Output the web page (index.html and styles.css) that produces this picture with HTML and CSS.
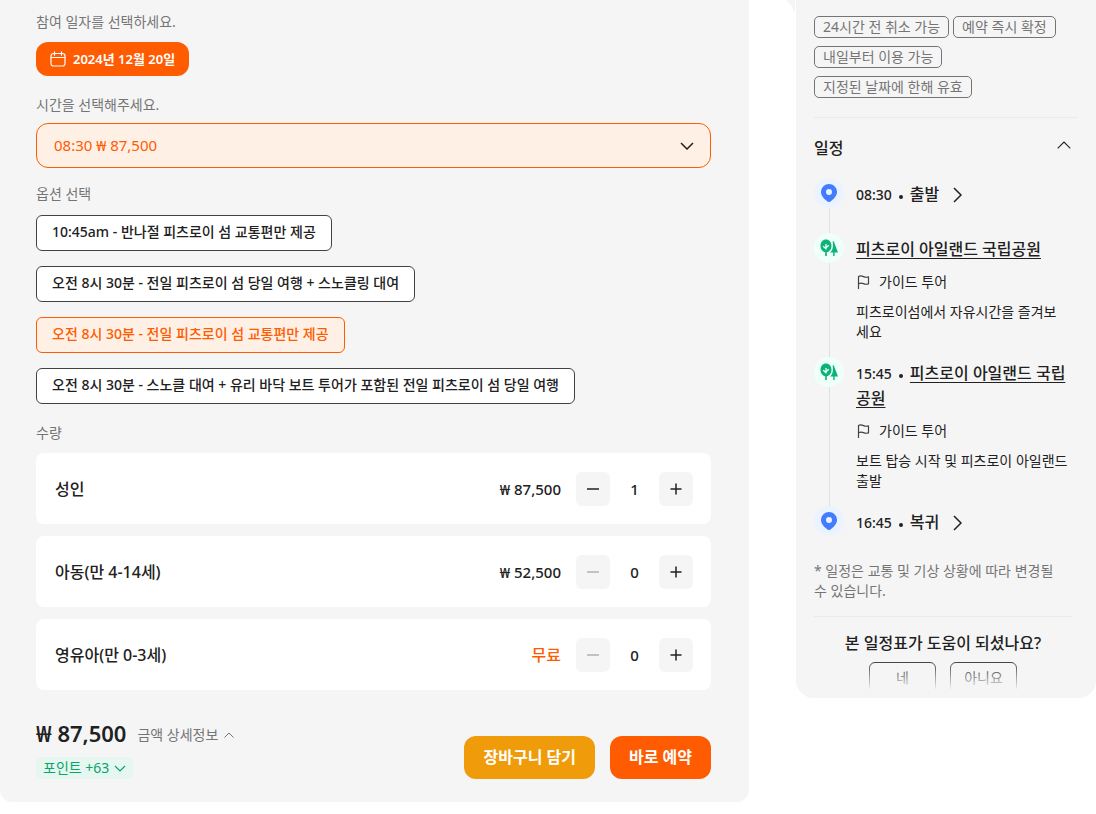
FILE: index.html
```html
<!DOCTYPE html>
<html lang="ko">
<head>
    <meta charset="UTF-8">
    <meta name="viewport" content="width=device-width, initial-scale=1.0">
    <title>피츠로이 섬 투어 예약</title>
    <link rel="stylesheet" href="styles.css">
</head>
<body>
    <div class="page">
        <!-- 예약 옵션 -->
        <main class="booking">
            <p class="label">참여 일자를 선택하세요.</p>
            <button class="date-btn" type="button">
                <svg width="16" height="16" viewBox="0 0 16 16" fill="none" stroke="currentColor" stroke-width="1.2" stroke-linecap="round">
                    <rect x="1" y="2.5" width="14" height="12.5" rx="2.5"/>
                    <path d="M1 6.5h14M4.5 .8v3.4M11.5 .8v3.4"/>
                </svg>
                2024년 12월 20일
            </button>

            <label class="label" for="time">시간을 선택해주세요.</label>
            <div class="time-box">
                <select id="time" class="time-select">
                    <option>08:30 ₩ 87,500</option>
                </select>
                <svg class="time-arrow" width="14" height="8" viewBox="0 0 14 8" fill="none" stroke="#212121" stroke-width="1.5">
                    <path d="M1 1l6 6 6-6"/>
                </svg>
            </div>

            <p class="label">옵션 선택</p>
            <div class="options">
                <button class="option" type="button">10:45am - 반나절 피츠로이 섬 교통편만 제공</button>
                <button class="option" type="button">오전 8시 30분 - 전일 피츠로이 섬 당일 여행 + 스노클링 대여</button>
                <button class="option selected" type="button">오전 8시 30분 - 전일 피츠로이 섬 교통편만 제공</button>
                <button class="option" type="button">오전 8시 30분 - 스노클 대여 + 유리 바닥 보트 투어가 포함된 전일 피츠로이 섬 당일 여행</button>
            </div>

            <p class="label">수량</p>
            <div class="quantities">
                <div class="qty-row">
                    <span class="qty-name">성인</span>
                    <span class="qty-price">₩ 87,500</span>
                    <button class="step" type="button" aria-label="성인 빼기">
                        <svg width="14" height="14" viewBox="0 0 14 14" stroke="currentColor" stroke-width="1.5"><path d="M1 7h12"/></svg>
                    </button>
                    <span class="qty-value">1</span>
                    <button class="step" type="button" aria-label="성인 더하기">
                        <svg width="14" height="14" viewBox="0 0 14 14" stroke="currentColor" stroke-width="1.5"><path d="M1.5 7h11M7 1.5v11"/></svg>
                    </button>
                </div>
                <div class="qty-row">
                    <span class="qty-name">아동(만 4-14세)</span>
                    <span class="qty-price">₩ 52,500</span>
                    <button class="step" type="button" aria-label="아동 빼기" disabled>
                        <svg width="14" height="14" viewBox="0 0 14 14" stroke="currentColor" stroke-width="1.5"><path d="M1 7h12"/></svg>
                    </button>
                    <span class="qty-value">0</span>
                    <button class="step" type="button" aria-label="아동 더하기">
                        <svg width="14" height="14" viewBox="0 0 14 14" stroke="currentColor" stroke-width="1.5"><path d="M1.5 7h11M7 1.5v11"/></svg>
                    </button>
                </div>
                <div class="qty-row">
                    <span class="qty-name">영유아(만 0-3세)</span>
                    <span class="qty-price free">무료</span>
                    <button class="step" type="button" aria-label="영유아 빼기" disabled>
                        <svg width="14" height="14" viewBox="0 0 14 14" stroke="currentColor" stroke-width="1.5"><path d="M1 7h12"/></svg>
                    </button>
                    <span class="qty-value">0</span>
                    <button class="step" type="button" aria-label="영유아 더하기">
                        <svg width="14" height="14" viewBox="0 0 14 14" stroke="currentColor" stroke-width="1.5"><path d="M1.5 7h11M7 1.5v11"/></svg>
                    </button>
                </div>
            </div>

            <div class="summary">
                <div class="totals">
                    <div class="total-line">
                        <strong class="total">₩ 87,500</strong>
                        <button class="detail-btn" type="button">
                            금액 상세정보
                            <svg width="10" height="6" viewBox="0 0 10 6" fill="none" stroke="currentColor"><path d="M.5 5.5L5 1l4.5 4.5"/></svg>
                        </button>
                    </div>
                    <button class="points" type="button">
                        포인트 +63
                        <svg width="12" height="7" viewBox="0 0 12 7" fill="none" stroke="currentColor" stroke-width="1.2"><path d="M1 1l5 5 5-5"/></svg>
                    </button>
                </div>
                <div class="actions">
                    <button class="action cart" type="button">장바구니 담기</button>
                    <button class="action book" type="button">바로 예약</button>
                </div>
            </div>
        </main>

        <!-- 상품 요약 -->
        <aside class="side">
            <div class="tags">
                <span class="tag">24시간 전 취소 가능</span>
                <span class="tag">예약 즉시 확정</span>
                <span class="tag">내일부터 이용 가능</span>
                <span class="tag">지정된 날짜에 한해 유효</span>
            </div>

            <div class="side-head">
                <h2 class="side-title">일정</h2>
                <button class="fold" type="button" aria-label="접기">
                    <svg width="14" height="8" viewBox="0 0 14 8" fill="none" stroke="#212121" stroke-width="1.1"><path d="M.7 7.3L7 1l6.3 6.3"/></svg>
                </button>
            </div>

            <ol class="timeline">
                <li class="stop">
                    <span class="dot pin">
                        <svg width="16" height="18" viewBox="0 0 16 18"><path fill="#437dff" fill-rule="evenodd" d="M8 0a8 8 0 0 1 8 8c0 4-3.2 7-6.5 9.5a2.5 2.5 0 0 1-3 0C3.2 15 0 12 0 8a8 8 0 0 1 8-8zm0 5a3 3 0 1 0 0 6 3 3 0 0 0 0-6z"/></svg>
                    </span>
                    <div class="stop-body">
                        <h3 class="stop-title"><time>08:30</time><i class="bullet"></i>출발
                            <svg class="go" width="9" height="16" viewBox="0 0 9 16" fill="none" stroke="currentColor" stroke-width="1.5"><path d="M1 1l7 7-7 7"/></svg>
                        </h3>
                    </div>
                </li>
                <li class="stop">
                    <span class="dot park">
                        <svg width="18" height="18" viewBox="0 0 18 18">
                            <path fill="#0cb377" d="M6 .5c3.200 0 5.500 2.700 5.500 6.300 0 3.400-1.900 6-4.700 6.500V17H5.200v-3.700C2.400 12.800.5 10.200.5 6.800.5 3.200 2.800.5 6 .5z"/>
                            <path fill="#0cb377" d="M12.700 2.500c.4-.4.900-.4 1.200.2L18 13.500h-3.400V17h-1.400v-3.500h-3c1.900-1.600 2.700-4 2.700-6.700 0-1.600-.1-3-.2-4.300z"/>
                            <path fill="none" stroke="#effff9" stroke-width="1.300" d="M6 10.500V5M6 9.800L3.200 7.200M6 8.800l2.800-2.600"/>
                        </svg>
                    </span>
                    <div class="stop-body">
                        <h3 class="stop-title"><a class="place" href="#">피츠로이 아일랜드 국립공원</a></h3>
                        <p class="kind">
                            <svg width="14" height="14" viewBox="0 0 14 14" fill="none" stroke="#424242" stroke-width="1.2" stroke-linejoin="round"><path d="M2.5 14V1.500C4.500.300 6 .900 7.500 1.600s3 .900 5 .3v7c-2 .6-3.500.4-5-.3s-3-1-5 .2"/></svg>
                            가이드 투어
                        </p>
                        <p class="desc">피츠로이섬에서 자유시간을 즐겨보세요</p>
                    </div>
                </li>
                <li class="stop">
                    <span class="dot park">
                        <svg width="18" height="18" viewBox="0 0 18 18">
                            <path fill="#0cb377" d="M6 .5c3.200 0 5.500 2.700 5.500 6.300 0 3.400-1.900 6-4.700 6.500V17H5.200v-3.700C2.400 12.800.5 10.200.5 6.800.5 3.200 2.800.5 6 .5z"/>
                            <path fill="#0cb377" d="M12.700 2.500c.4-.4.900-.4 1.200.2L18 13.500h-3.400V17h-1.400v-3.500h-3c1.900-1.600 2.700-4 2.700-6.700 0-1.600-.1-3-.2-4.300z"/>
                            <path fill="none" stroke="#effff9" stroke-width="1.300" d="M6 10.500V5M6 9.800L3.200 7.200M6 8.800l2.800-2.600"/>
                        </svg>
                    </span>
                    <div class="stop-body">
                        <h3 class="stop-title"><time>15:45</time><i class="bullet"></i><a class="place" href="#">피츠로이 아일랜드 국립공원</a></h3>
                        <p class="kind">
                            <svg width="14" height="14" viewBox="0 0 14 14" fill="none" stroke="#424242" stroke-width="1.2" stroke-linejoin="round"><path d="M2.5 14V1.500C4.500.300 6 .900 7.500 1.600s3 .900 5 .3v7c-2 .6-3.500.4-5-.3s-3-1-5 .2"/></svg>
                            가이드 투어
                        </p>
                        <p class="desc">보트 탑승 시작 및 피츠로이 아일랜드 출발</p>
                    </div>
                </li>
                <li class="stop">
                    <span class="dot pin">
                        <svg width="16" height="18" viewBox="0 0 16 18"><path fill="#437dff" fill-rule="evenodd" d="M8 0a8 8 0 0 1 8 8c0 4-3.2 7-6.5 9.5a2.5 2.5 0 0 1-3 0C3.2 15 0 12 0 8a8 8 0 0 1 8-8zm0 5a3 3 0 1 0 0 6 3 3 0 0 0 0-6z"/></svg>
                    </span>
                    <div class="stop-body">
                        <h3 class="stop-title"><time>16:45</time><i class="bullet"></i>복귀
                            <svg class="go" width="9" height="16" viewBox="0 0 9 16" fill="none" stroke="currentColor" stroke-width="1.5"><path d="M1 1l7 7-7 7"/></svg>
                        </h3>
                    </div>
                </li>
            </ol>

            <p class="note">* 일정은 교통 및 기상 상황에 따라 변경될 수 있습니다.</p>

            <div class="feedback">
                <p class="question">본 일정표가 도움이 되셨나요?</p>
                <div class="answers">
                    <button class="answer" type="button">네</button>
                    <button class="answer" type="button">아니요</button>
                </div>
            </div>
        </aside>
    </div>
</body>
</html>
```
FILE: styles.css
```css
* {
    box-sizing: border-box;
}

body {
    margin: 0;
    background: #fff;
    color: #212121;
    font-family: "Noto Sans", "Noto Sans CJK KR", sans-serif;
    font-size: 14px;
    line-height: 20px;
}

p, h2, h3, ol {
    margin: 0;
    padding: 0;
}

button, select {
    font: inherit;
    color: inherit;
    cursor: pointer;
}

svg {
    flex: none;
}

.page {
    display: flex;
    align-items: flex-start;
    gap: 47px;
}

/* 예약 옵션 */
.booking {
    flex: 1;
    min-width: 0;
    padding: 12px 38px 23px 36px;
    background: #f5f5f5;
    border-radius: 0 0 12px 12px;
}

.label {
    display: block;
    color: #757575;
}

.date-btn {
    display: flex;
    align-items: center;
    gap: 7px;
    height: 34px;
    margin: 10px 0 19px;
    padding: 0 14px;
    border: 0;
    border-radius: 12px;
    background: #ff5b00;
    color: #fff;
    font-size: 13px;
    font-weight: 600;
}

.time-box {
    display: grid;
    align-items: center;
    margin: 8px 0 16px;
}

.time-select {
    grid-area: 1 / 1;
    appearance: none;
    width: 100%;
    height: 45px;
    padding: 0 17px 2px;
    border: 1px solid #ff5b00;
    border-radius: 12px;
    background: #fff0e5;
    color: #ff5b00;
    font-size: 15px;
}

.time-arrow {
    grid-area: 1 / 1;
    justify-self: end;
    margin-right: 17px;
    pointer-events: none;
}

.options {
    display: flex;
    flex-direction: column;
    align-items: flex-start;
    gap: 15px;
    margin: 11px 0 19px;
}

.option {
    min-height: 36px;
    padding: 0 15px 2px;
    border: 1px solid #424242;
    border-radius: 6px;
    background: #fff;
    font-weight: 500;
    text-align: left;
}

.option.selected {
    border-color: #ff5b00;
    background: #fff0e5;
    color: #ff5b00;
}

.quantities {
    display: flex;
    flex-direction: column;
    gap: 12px;
    margin-top: 10px;
}

.qty-row {
    display: flex;
    align-items: center;
    height: 71px;
    padding: 0 18px 0 19px;
    border-radius: 8px;
    background: #fff;
    font-size: 15px;
    font-weight: 500;
}

.qty-name {
    flex: 1;
    font-size: 16px;
}

.qty-price {
    margin-right: 15px;
}

.qty-price.free {
    color: #ff5b00;
    font-size: 16px;
}

.qty-value {
    width: 49px;
    text-align: center;
}

.step {
    display: flex;
    align-items: center;
    justify-content: center;
    width: 34px;
    height: 34px;
    padding: 0;
    border: 0;
    border-radius: 6px;
    background: #f5f5f5;
}

.step:disabled {
    color: #b0b0b0;
    cursor: default;
}

.summary {
    display: flex;
    align-items: flex-end;
    justify-content: space-between;
    margin-top: 28px;
}

.total-line {
    display: flex;
    align-items: center;
    gap: 11px;
    height: 30px;
}

.total {
    font-size: 22px;
    font-weight: 600;
}

.detail-btn {
    display: flex;
    align-items: center;
    gap: 6px;
    padding: 4px 0 0;
    border: 0;
    background: none;
    color: #757575;
}

.points {
    display: flex;
    align-items: center;
    gap: 5px;
    height: 22px;
    margin-top: 9px;
    padding: 0 7px;
    border: 0;
    border-radius: 5px;
    background: #e6f6f0;
    color: #08a668;
}

.actions {
    display: flex;
    gap: 15px;
}

.action {
    height: 43px;
    padding: 0 19px 2px;
    border: 0;
    border-radius: 12px;
    color: #fff;
    font-size: 16px;
    font-weight: 600;
}

.cart {
    background: #f09b0a;
}

.book {
    background: #ff5b00;
}

/* 상품 요약 */
.side {
    position: relative;
    width: 300px;
    padding: 16px 18px 4px;
    background: #f5f5f5;
    border-radius: 0 0 18px 18px;
}

.side::before {
    content: "";
    position: absolute;
    top: 0;
    left: -10px;
    width: 9px;
    height: 13px;
    background: #f5f5f5;
    clip-path: polygon(0 0, 100% 0, 100% 100%, 60% 45%);
}

/* 아래쪽 흐림 처리 */
.side::after {
    content: "";
    position: absolute;
    right: 0;
    bottom: 0;
    left: 0;
    height: 36px;
    border-radius: 0 0 18px 18px;
    background: linear-gradient(rgba(245, 245, 245, 0), #f5f5f5 78%);
    pointer-events: none;
}

.tags {
    display: flex;
    flex-wrap: wrap;
    gap: 8px 4px;
    padding-bottom: 19px;
    border-bottom: 1px solid #ebebeb;
}

.tag {
    height: 22px;
    padding: 0 8px;
    border: 1px solid #757575;
    border-radius: 5px;
    color: #757575;
}

.side-head {
    display: flex;
    align-items: center;
    justify-content: space-between;
    height: 60px;
    padding-right: 7px;
}

.side-title {
    font-size: 16px;
    font-weight: 500;
}

.fold {
    display: flex;
    padding: 0 0 6px;
    border: 0;
    background: none;
}

.timeline {
    padding-right: 6px;
    list-style: none;
}

.stop {
    display: flex;
    gap: 12px;
    min-height: 55px;
    background: linear-gradient(#e0e0e0, #e0e0e0) 15px 0 / 1px 100% no-repeat;
}

.stop:last-child {
    min-height: 30px;
    background: none;
}

.dot {
    display: flex;
    flex: none;
    align-items: center;
    justify-content: center;
    width: 30px;
    height: 30px;
    border-radius: 50%;
}

.pin {
    background: #eaf3ff;
}

.park {
    background: #effff9;
}

.stop-body {
    flex: 1;
    padding: 4px 0 15px;
}

.stop:last-child .stop-body {
    padding-bottom: 0;
}

.stop-title {
    font-size: 16px;
    font-weight: 500;
    line-height: 25px;
}

.stop-title time {
    font-size: 14px;
}

.bullet {
    display: inline-block;
    width: 4px;
    height: 4px;
    margin: 0 7px 1px;
    border-radius: 50%;
    background: #212121;
}

.go {
    margin-left: 10px;
    vertical-align: -3px;
}

.place {
    color: inherit;
    text-underline-offset: 3px;
}

.kind {
    display: flex;
    align-items: center;
    gap: 9px;
    margin: 10px 0;
}

.desc {
    padding-right: 4px;
}

.note {
    margin: 25px 0 15px;
    padding-right: 16px;
    color: #757575;
}

.feedback {
    margin-right: 6px;
    padding-top: 16px;
    border-top: 1px solid #ebebeb;
    text-align: center;
}

.question {
    font-size: 16px;
    font-weight: 500;
}

.answers {
    display: flex;
    justify-content: center;
    gap: 14px;
    margin-top: 9px;
}

.answer {
    width: 67px;
    height: 32px;
    padding: 0;
    border: 1px solid #424242;
    border-radius: 6px;
    background: none;
}
```
